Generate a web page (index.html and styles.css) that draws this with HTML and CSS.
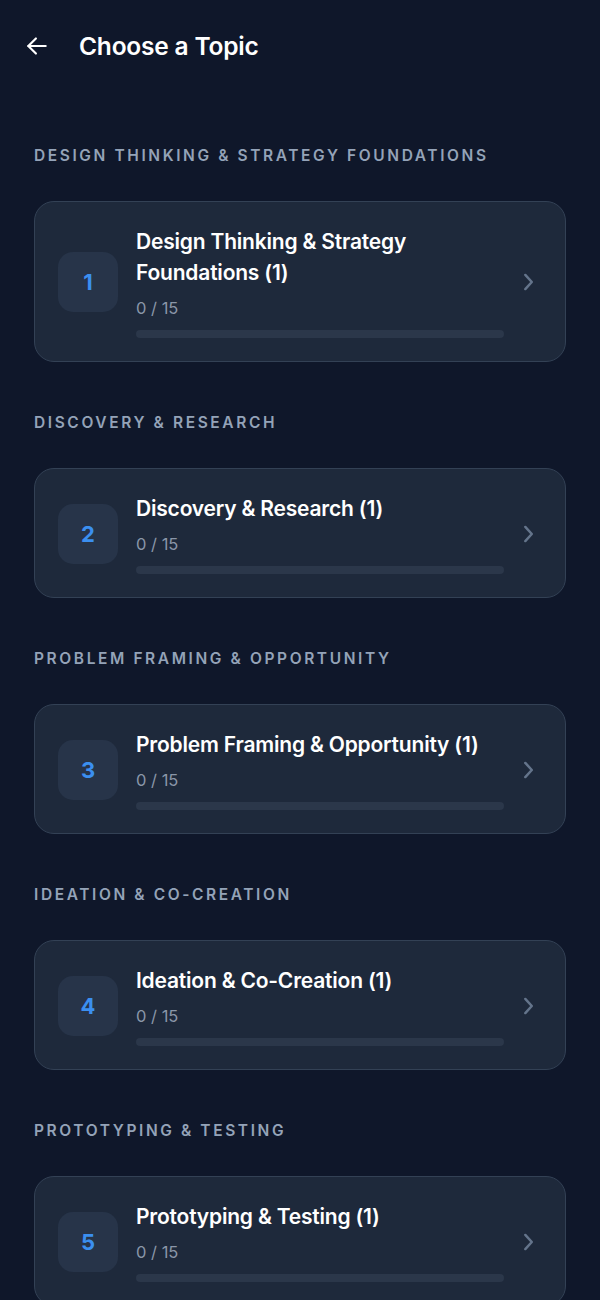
FILE: index.html
```html
<!DOCTYPE html>
<html lang="en">
<head>
    <meta charset="UTF-8">
    <meta name="viewport" content="width=device-width, initial-scale=1.0">
    <title>Choose a Topic</title>
    <link rel="stylesheet" href="styles.css">
</head>
<body>
    <div class="header">
        <svg class="back" width="26" height="26" viewBox="0 0 24 24" fill="none" stroke="#fff" stroke-width="2" stroke-linecap="round" stroke-linejoin="round">
            <path d="M20 12H4"/>
            <path d="M11 5l-7 7 7 7"/>
        </svg>
        <h1>Choose a Topic</h1>
    </div>

    <div class="list">
        <div class="section">
            <div class="label">Design Thinking &amp; Strategy Foundations</div>
            <div class="card">
                <div class="num">1</div>
                <div class="info">
                    <div class="title">Design Thinking &amp; Strategy Foundations (1)</div>
                    <div class="count">0 / 15</div>
                    <div class="bar"><div class="fill" style="width: 0%"></div></div>
                </div>
                <svg class="chev" width="26" height="26" viewBox="0 0 24 24" fill="none" stroke="#64748b" stroke-width="2.3" stroke-linecap="round" stroke-linejoin="round"><path d="M9.5 5.5l6 6.5-6 6.5"/></svg>
            </div>
        </div>

        <div class="section">
            <div class="label">Discovery &amp; Research</div>
            <div class="card">
                <div class="num">2</div>
                <div class="info">
                    <div class="title">Discovery &amp; Research (1)</div>
                    <div class="count">0 / 15</div>
                    <div class="bar"><div class="fill" style="width: 0%"></div></div>
                </div>
                <svg class="chev" width="26" height="26" viewBox="0 0 24 24" fill="none" stroke="#64748b" stroke-width="2.3" stroke-linecap="round" stroke-linejoin="round"><path d="M9.5 5.5l6 6.5-6 6.5"/></svg>
            </div>
        </div>

        <div class="section">
            <div class="label">Problem Framing &amp; Opportunity</div>
            <div class="card">
                <div class="num">3</div>
                <div class="info">
                    <div class="title">Problem Framing &amp; Opportunity (1)</div>
                    <div class="count">0 / 15</div>
                    <div class="bar"><div class="fill" style="width: 0%"></div></div>
                </div>
                <svg class="chev" width="26" height="26" viewBox="0 0 24 24" fill="none" stroke="#64748b" stroke-width="2.3" stroke-linecap="round" stroke-linejoin="round"><path d="M9.5 5.5l6 6.5-6 6.5"/></svg>
            </div>
        </div>

        <div class="section">
            <div class="label">Ideation &amp; Co-Creation</div>
            <div class="card">
                <div class="num">4</div>
                <div class="info">
                    <div class="title">Ideation &amp; Co-Creation (1)</div>
                    <div class="count">0 / 15</div>
                    <div class="bar"><div class="fill" style="width: 0%"></div></div>
                </div>
                <svg class="chev" width="26" height="26" viewBox="0 0 24 24" fill="none" stroke="#64748b" stroke-width="2.3" stroke-linecap="round" stroke-linejoin="round"><path d="M9.5 5.5l6 6.5-6 6.5"/></svg>
            </div>
        </div>

        <div class="section">
            <div class="label">Prototyping &amp; Testing</div>
            <div class="card">
                <div class="num">5</div>
                <div class="info">
                    <div class="title">Prototyping &amp; Testing (1)</div>
                    <div class="count">0 / 15</div>
                    <div class="bar"><div class="fill" style="width: 0%"></div></div>
                </div>
                <svg class="chev" width="26" height="26" viewBox="0 0 24 24" fill="none" stroke="#64748b" stroke-width="2.3" stroke-linecap="round" stroke-linejoin="round"><path d="M9.5 5.5l6 6.5-6 6.5"/></svg>
            </div>
        </div>
    </div>
</body>
</html>
```

FILE: styles.css
```css
body {
    margin: 0;
    background-color: #0f172a;
    font-family: Inter, "Noto Sans", sans-serif;
    color: #fff;
}
.header {
    display: flex;
    align-items: center;
    height: 92px;
    padding: 0 24px;
    gap: 29px;
}
.header h1 {
    margin: 0;
    font-size: 24.5px;
    font-weight: 600;
    letter-spacing: -0.2px;
}
.back {
    flex-shrink: 0;
}
.list {
    padding: 54px 34px 40px;
    display: flex;
    flex-direction: column;
    gap: 51px;
}
.label {
    font-size: 15.5px;
    line-height: 20px;
    font-weight: 600;
    letter-spacing: 2.6px;
    text-transform: uppercase;
    color: #94a3b8;
    margin-bottom: 35px;
}
.card {
    display: flex;
    align-items: center;
    background-color: #1e293b;
    border: 1px solid #334155;
    border-radius: 20px;
    padding: 24px 24px 23px 23px;
}
.num {
    width: 60px;
    height: 60px;
    flex-shrink: 0;
    border-radius: 15px;
    background-color: #273449;
    color: #3b8ff0;
    font-size: 22px;
    font-weight: 700;
    display: flex;
    align-items: center;
    justify-content: center;
}
.info {
    flex: 1;
    margin-left: 18px;
    margin-right: 11px;
}
.title {
    font-size: 21px;
    line-height: 31px;
    font-weight: 600;
    letter-spacing: -0.2px;
}
.count {
    margin-top: 10px;
    font-size: 16.5px;
    line-height: 20px;
    color: #8a96a8;
}
.bar {
    margin-top: 12px;
    height: 8px;
    border-radius: 4px;
    background-color: #2b374a;
}
.fill {
    height: 100%;
    border-radius: 4px;
    background-color: #3b8ff0;
}
.chev {
    flex-shrink: 0;
}
```
